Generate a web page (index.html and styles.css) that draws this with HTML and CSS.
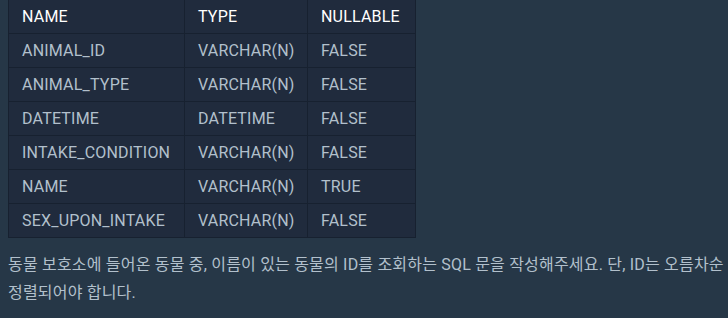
FILE: index.html
```html
<!DOCTYPE html>
<html lang="ko">
<head>
<meta charset="utf-8">
<link rel="stylesheet" href="styles.css">
</head>
<body>
<div class="content">
  <table class="schema">
    <colgroup><col class="c1"><col class="c2"><col class="c3"></colgroup>
    <thead>
      <tr><th>NAME</th><th>TYPE</th><th>NULLABLE</th></tr>
    </thead>
    <tbody>
      <tr><td>ANIMAL_ID</td><td>VARCHAR(N)</td><td>FALSE</td></tr>
      <tr><td>ANIMAL_TYPE</td><td>VARCHAR(N)</td><td>FALSE</td></tr>
      <tr><td>DATETIME</td><td>DATETIME</td><td>FALSE</td></tr>
      <tr><td>INTAKE_CONDITION</td><td>VARCHAR(N)</td><td>FALSE</td></tr>
      <tr><td>NAME</td><td>VARCHAR(N)</td><td>TRUE</td></tr>
      <tr><td>SEX_UPON_INTAKE</td><td>VARCHAR(N)</td><td>FALSE</td></tr>
    </tbody>
  </table>
  <p class="desc">동물 보호소에 들어온 동물 중, 이름이 있는 동물의 ID를 조회하는 SQL 문을 작성해주세요. 단, ID는 오름차순 정렬되어야 합니다.</p>
</div>
</body>
</html>
```
FILE: styles.css
```css
html, body {
  margin: 0;
  padding: 0;
  background: #263747;
}
body {
  font-family: Roboto, "Noto Sans CJK KR", sans-serif;
  color: #b2c0cc;
  overflow: hidden;
}
.content {
  padding: 0 0 0 8px;
  margin-top: -1px;
}
.schema {
  border-collapse: collapse;
  table-layout: fixed;
  width: 407px;
  background: #202b3d;
  font-size: 16px;
  line-height: 21px;
  letter-spacing: 0.2px;
}
.schema .c1 { width: 176px; }
.schema .c2 { width: 123px; }
.schema .c3 { width: 108px; }
.schema th, .schema td {
  border: 1px solid #172130;
  padding: 6px 13px;
  text-align: left;
  white-space: nowrap;
  overflow: hidden;
}
.schema th {
  color: #ffffff;
  font-weight: 400;
}
.desc {
  margin: 13px 0 0;
  font-size: 16px;
  line-height: 28px;
  letter-spacing: 0.2px;
  word-break: keep-all;
}
```
